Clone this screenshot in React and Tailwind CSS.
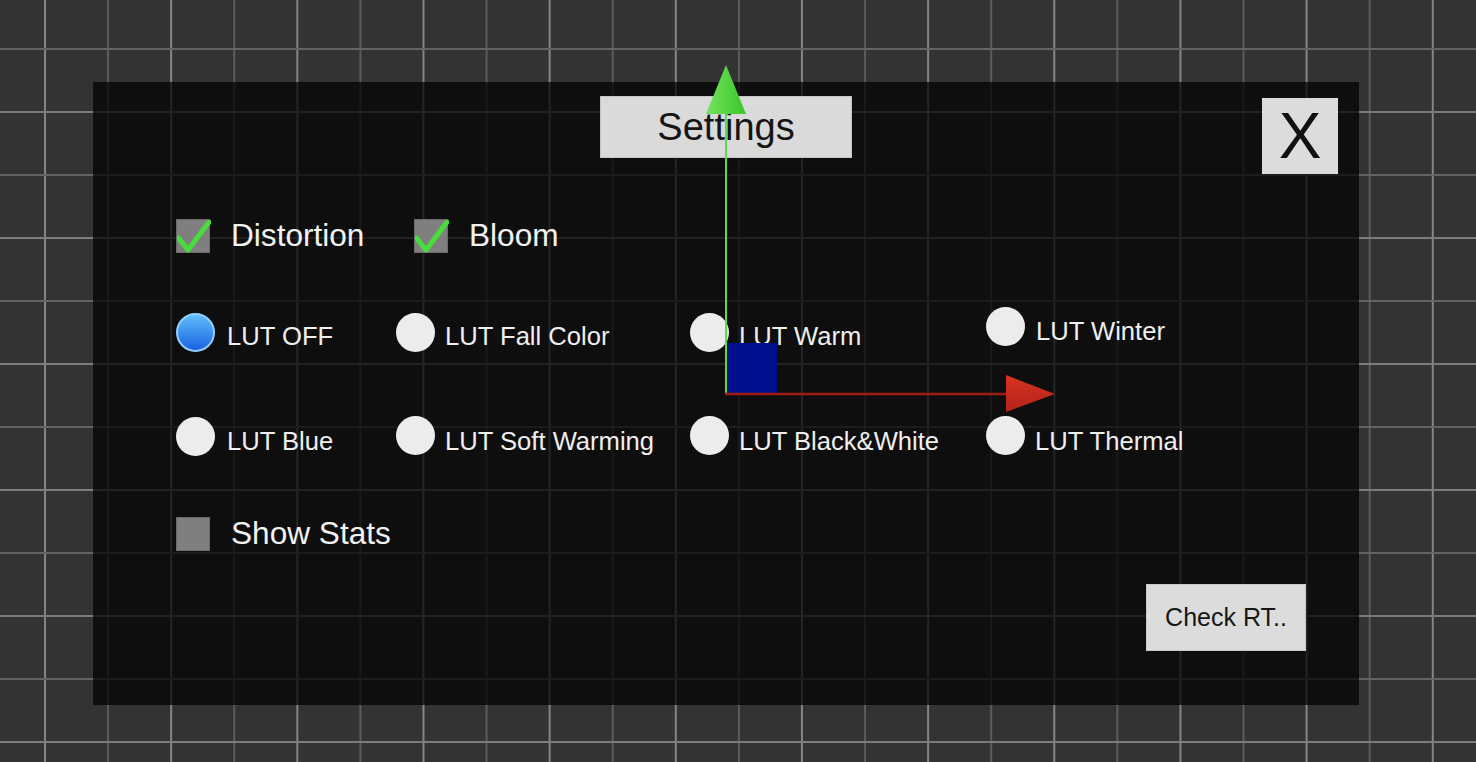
import React from 'react';

const font = "font-['Liberation_Sans',Arial,Helvetica,sans-serif]";

// scene grid behind the panel
function SceneGrid() {
  const xs = Array.from({ length: 24 }, (_, i) => 45 + i * 63.08);
  const ys = Array.from({ length: 13 }, (_, i) => 49 + i * 63);
  return (
    <svg className="absolute inset-0" width="1476" height="762">
      {xs.map((x, i) => (
        <line key={'v' + i} x1={x} y1="0" x2={x} y2="762" stroke={i % 2 === 0 ? '#858585' : '#5c5c5c'} strokeWidth="2" />
      ))}
      {ys.map((y, i) => (
        <line key={'h' + i} x1="0" y1={y} x2="1476" y2={y} stroke={i % 2 === 1 ? '#7c7c7c' : '#646464'} strokeWidth="2" />
      ))}
    </svg>
  );
}

// move gizmo drawn over the canvas
function Gizmo() {
  return (
    <svg className="absolute inset-0 z-10 pointer-events-none" width="1476" height="762">
      <defs>
        <linearGradient id="gcone" x1="0" y1="0" x2="1" y2="0">
          <stop offset="0" stopColor="#74e35e" />
          <stop offset="1" stopColor="#3bc52b" />
        </linearGradient>
        <linearGradient id="rcone" x1="0" y1="0" x2="0" y2="1">
          <stop offset="0" stopColor="#d8331f" />
          <stop offset="1" stopColor="#b4231a" />
        </linearGradient>
      </defs>
      <rect x="727" y="343" width="50" height="50" fill="#00108c" />
      <line x1="726" y1="110" x2="726" y2="394" stroke="#5ad94a" strokeWidth="2" />
      <line x1="725" y1="394" x2="1010" y2="394" stroke="#a01c12" strokeWidth="2.5" />
      <polygon points="726,65 706,114 746,114" fill="url(#gcone)" />
      <polygon points="1055,394 1006,375 1006,412" fill="url(#rcone)" />
    </svg>
  );
}

function CheckBox({ checked }) {
  return (
    <div className="relative w-[34px] h-[34px] bg-[#7f7f7f] border border-[#6b6b6b] shrink-0">
      {checked && (
        <svg className="absolute left-0 top-0" width="34" height="34" viewBox="0 0 34 34">
          <path d="M1.5 18 L11 30 L32 2" fill="none" stroke="#48dc3c" strokeWidth="5" strokeLinecap="round" strokeLinejoin="round" />
        </svg>
      )}
    </div>
  );
}

function CheckItem({ label, checked, className }) {
  return (
    <div className={`flex items-center ${className || ''}`}>
      <CheckBox checked={checked} />
      <span className="ml-[21px] text-[31.6px] leading-none text-[#f2f2f2]">{label}</span>
    </div>
  );
}

function Radio({ item }) {
  return (
    <div className="flex items-start">
      <div
        className={`w-[39px] h-[39px] rounded-full shrink-0 ${item.circle} ${
          item.selected
            ? 'bg-gradient-to-b from-[#62bdf7] to-[#1d60e2] border-2 border-[#8fd0ff]'
            : 'bg-[#ececec]'
        }`}
      />
      <span className={`text-[25.6px] leading-none text-[#efefef] whitespace-nowrap ${item.gap} ${item.text}`}>
        {item.label}
      </span>
    </div>
  );
}

const row1 = [
  { label: 'LUT OFF', selected: true, circle: 'mt-[6px]', text: 'mt-[17px]', gap: 'ml-[12px]' },
  { label: 'LUT Fall Color', circle: 'mt-[6px]', text: 'mt-[17px]', gap: 'ml-[10px]' },
  { label: 'LUT Warm', circle: 'mt-[6px]', text: 'mt-[17px]', gap: 'ml-[10px]' },
  { label: 'LUT Winter', circle: 'mt-0', text: 'mt-[12px]', gap: 'ml-[11px]' },
];

const row2 = [
  { label: 'LUT Blue', circle: 'mt-[1px]', text: 'mt-[13px]', gap: 'ml-[12px]' },
  { label: 'LUT Soft Warming', circle: 'mt-0', text: 'mt-[13px]', gap: 'ml-[10px]' },
  { label: 'LUT Black&White', circle: 'mt-0', text: 'mt-[13px]', gap: 'ml-[10px]' },
  { label: 'LUT Thermal', circle: 'mt-0', text: 'mt-[13px]', gap: 'ml-[10px]' },
];

export default function App() {
  return (
    <div className={`relative w-[1476px] h-[762px] overflow-hidden bg-[#333333] ${font}`}>
      <SceneGrid />

      <div className="relative pt-[82px] pl-[93px]">
        <div className="w-[1266px] h-[623px] bg-black/[0.72] flex flex-col">
          {/* header */}
          <div className="grid grid-cols-[1fr_252px_1fr] items-start pt-[14px]">
            <div />
            <div className="h-[62px] bg-[#dadada] border border-[#c4c4c4] flex items-center justify-center text-[38px] leading-none text-[#151515]">
              Settings
            </div>
            <div className="flex justify-end pr-[21px] pt-[2px]">
              <div className="w-[76px] h-[76px] bg-[#dcdcdc] flex items-center justify-center text-[64px] leading-none text-[#111111]">
                X
              </div>
            </div>
          </div>

          {/* options */}
          <div className="flex flex-col pl-[83px]">
            <div className="mt-[45px] flex items-center h-[34px]">
              <CheckItem label="Distortion" checked className="w-[238px]" />
              <CheckItem label="Bloom" checked />
            </div>

            <div className="mt-[54px] grid grid-cols-[220px_294px_296px_auto] h-[45px] items-start">
              {row1.map((item) => (
                <Radio key={item.label} item={item} />
              ))}
            </div>

            <div className="mt-[64px] grid grid-cols-[220px_294px_296px_auto] h-[40px] items-start">
              {row2.map((item) => (
                <Radio key={item.label} item={item} />
              ))}
            </div>

            <div className="mt-[61px] flex items-center h-[34px]">
              <CheckItem label="Show Stats" />
            </div>
          </div>

          <div className="self-end mr-[53px] mt-[33px] w-[160px] h-[67px] bg-[#dcdcdc] border border-[#c8c8c8] flex items-center justify-center text-[25px] leading-none text-[#161616]">
            Check RT..
          </div>
        </div>
      </div>

      <Gizmo />
    </div>
  );
}
